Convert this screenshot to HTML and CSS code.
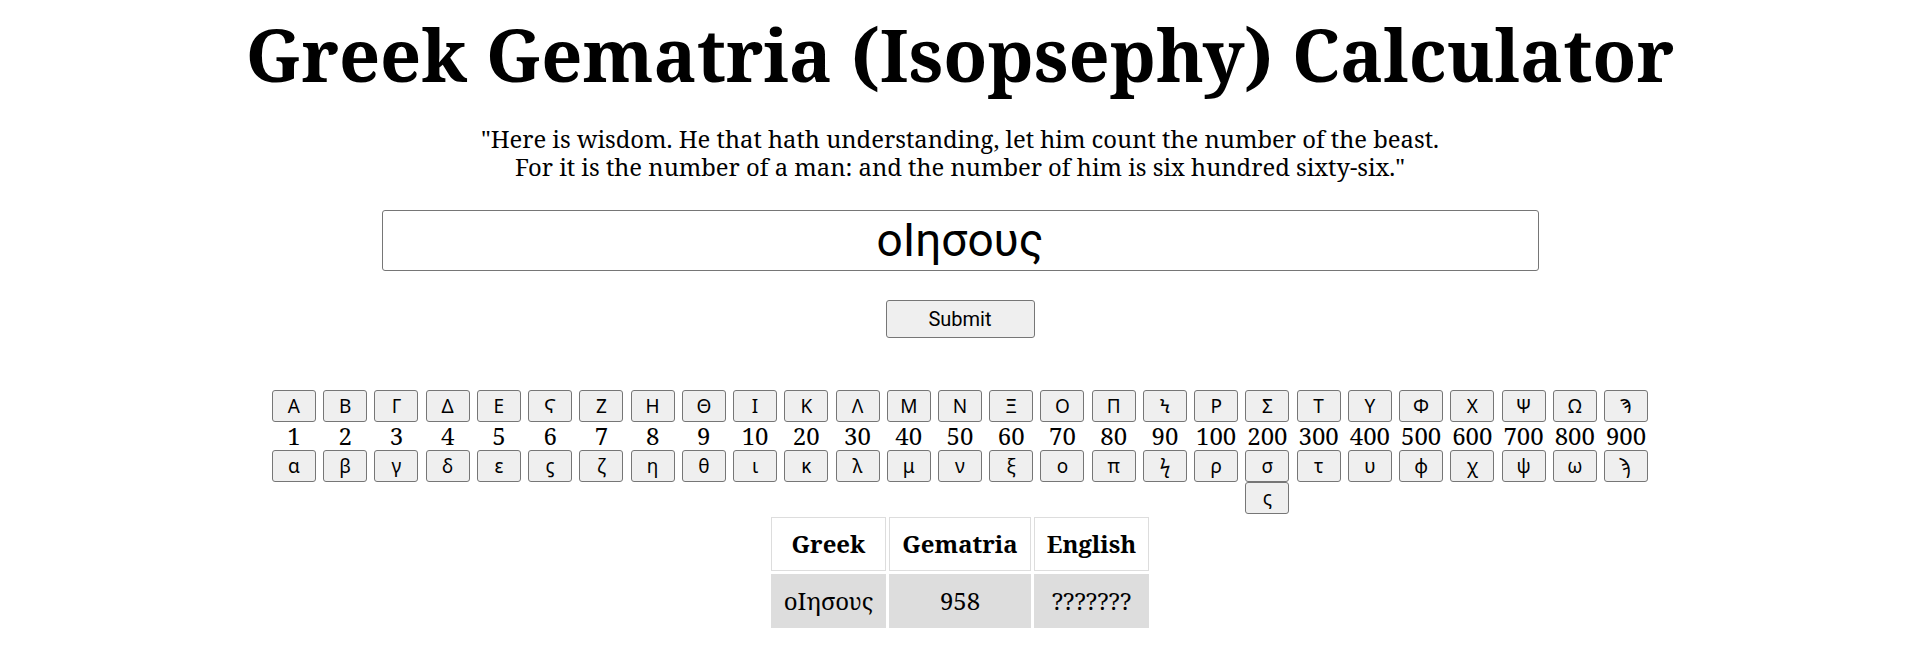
FILE: index.html
```html
<!DOCTYPE html>
<html lang="en">
<head>
<meta charset="utf-8">
<title>Greek Gematria (Isopsephy) Calculator</title>
<link rel="stylesheet" href="styles.css">
</head>
<body>
<h1 class="title">Greek Gematria (Isopsephy) Calculator</h1>
<p class="quote"><span class="line">"Here is wisdom. He that hath understanding, let him count the number of the beast.</span><span class="line">For it is the number of a man: and the number of him is six hundred sixty-six."</span></p>
<form class="form">
  <input class="word" type="text" value="οΙησους">
  <button class="submit" type="button">Submit</button>
</form>
<div class="keys">
  <div class="col"><button class="key">Α</button><span class="num">1</span><button class="key">α</button></div>
  <div class="col"><button class="key">Β</button><span class="num">2</span><button class="key">β</button></div>
  <div class="col"><button class="key">Γ</button><span class="num">3</span><button class="key">γ</button></div>
  <div class="col"><button class="key">Δ</button><span class="num">4</span><button class="key">δ</button></div>
  <div class="col"><button class="key">Ε</button><span class="num">5</span><button class="key">ε</button></div>
  <div class="col"><button class="key">Ϛ</button><span class="num">6</span><button class="key">ϛ</button></div>
  <div class="col"><button class="key">Ζ</button><span class="num">7</span><button class="key">ζ</button></div>
  <div class="col"><button class="key">Η</button><span class="num">8</span><button class="key">η</button></div>
  <div class="col"><button class="key">Θ</button><span class="num">9</span><button class="key">θ</button></div>
  <div class="col"><button class="key">Ι</button><span class="num">10</span><button class="key">ι</button></div>
  <div class="col"><button class="key">Κ</button><span class="num">20</span><button class="key">κ</button></div>
  <div class="col"><button class="key">Λ</button><span class="num">30</span><button class="key">λ</button></div>
  <div class="col"><button class="key">Μ</button><span class="num">40</span><button class="key">μ</button></div>
  <div class="col"><button class="key">Ν</button><span class="num">50</span><button class="key">ν</button></div>
  <div class="col"><button class="key">Ξ</button><span class="num">60</span><button class="key">ξ</button></div>
  <div class="col"><button class="key">Ο</button><span class="num">70</span><button class="key">ο</button></div>
  <div class="col"><button class="key">Π</button><span class="num">80</span><button class="key">π</button></div>
  <div class="col"><button class="key">Ϟ</button><span class="num">90</span><button class="key">ϟ</button></div>
  <div class="col"><button class="key">Ρ</button><span class="num">100</span><button class="key">ρ</button></div>
  <div class="col"><button class="key">Σ</button><span class="num">200</span><button class="key">σ</button><button class="key">ς</button></div>
  <div class="col"><button class="key">Τ</button><span class="num">300</span><button class="key">τ</button></div>
  <div class="col"><button class="key">Υ</button><span class="num">400</span><button class="key">υ</button></div>
  <div class="col"><button class="key">Φ</button><span class="num">500</span><button class="key">φ</button></div>
  <div class="col"><button class="key">Χ</button><span class="num">600</span><button class="key">χ</button></div>
  <div class="col"><button class="key">Ψ</button><span class="num">700</span><button class="key">ψ</button></div>
  <div class="col"><button class="key">Ω</button><span class="num">800</span><button class="key">ω</button></div>
  <div class="col"><button class="key">Ϡ</button><span class="num">900</span><button class="key">ϡ</button></div>
</div>
<table class="results">
  <thead>
    <tr><th>Greek</th><th>Gematria</th><th>English</th></tr>
  </thead>
  <tbody>
    <tr><td>οΙησους</td><td>958</td><td>???????</td></tr>
  </tbody>
</table>
</body>
</html>
```

FILE: styles.css
```css
html, body {
  margin: 0;
  padding: 0;
  background: #ffffff;
  color: #000000;
}
body {
  font-family: "Noto Serif", "DejaVu Serif", serif;
  display: flex;
  flex-direction: column;
  align-items: center;
  padding: 0 8px;
}
.title {
  font-size: 72px;
  font-weight: 700;
  line-height: 72px;
  margin: 18px 0 0 0;
  white-space: nowrap;
}
.quote {
  display: flex;
  flex-direction: column;
  align-items: center;
  font-size: 23.8px;
  text-align: center;
  margin: 35px 0 0 0;
}
.line {
  display: block;
  height: 28px;
  line-height: 28px;
  white-space: nowrap;
}
.form {
  display: flex;
  flex-direction: column;
  align-items: center;
  margin-top: 28.5px;
}
.word {
  box-sizing: border-box;
  width: 1157px;
  height: 61px;
  border: 1px solid #767676;
  border-radius: 3px;
  font-family: Roboto, "Noto Sans", sans-serif;
  font-size: 46px;
  text-align: center;
  padding: 0 4px;
  margin: 0;
  color: #000;
  background: #fff;
}
.submit {
  box-sizing: border-box;
  width: 149px;
  height: 38px;
  margin-top: 29px;
  font-family: Roboto, "Noto Sans", sans-serif;
  font-size: 20px;
  background: #efefef;
  border: 1px solid #767676;
  border-radius: 3px;
  color: #000;
  padding: 0;
}
.keys {
  display: flex;
  margin-top: 52px;
}
.col {
  width: 51.24px;
  display: flex;
  flex-direction: column;
  align-items: center;
}
.key {
  box-sizing: border-box;
  width: 44px;
  height: 32px;
  padding: 0;
  margin: 0;
  font-family: "Noto Sans", "DejaVu Sans", sans-serif;
  font-size: 19px;
  background: #efefef;
  border: 1px solid #767676;
  border-radius: 3px;
  color: #000;
}
.num {
  font-size: 24px;
  line-height: 28px;
  height: 28px;
  white-space: nowrap;
}
.results {
  border-collapse: separate;
  border-spacing: 3px;
  margin-top: 0;
  font-size: 24px;
}
.results th, .results td {
  border: 1px solid #dddddd;
  padding: 12px 12px;
  text-align: center;
  line-height: 28px;
}
.results td {
  background: #dddddd;
}
```
